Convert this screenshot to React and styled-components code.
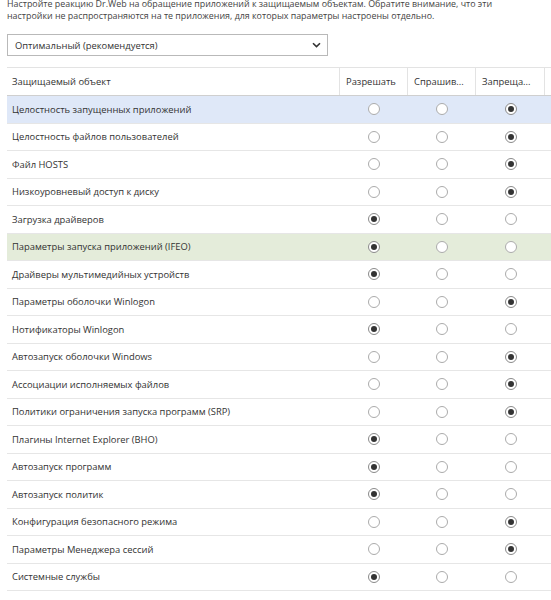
import React from 'react';
import styled, { createGlobalStyle } from 'styled-components';

const GlobalStyle = createGlobalStyle`
  html, body {
    margin: 0;
    padding: 0;
    background: #fff;
  }
  body {
    font-family: "Open Sans", "Noto Sans", "Liberation Sans", sans-serif;
    color: #333;
  }
`;

const Page = styled.div`
  width: 551px;
  height: 600px;
  overflow: hidden;
  padding-left: 7px;
  box-sizing: border-box;
`;

const Intro = styled.p`
  margin: -2px 0 0;
  font-size: 8.9px;
  line-height: 12px;
  color: #444;
  white-space: nowrap;
`;

const Select = styled.div`
  margin-top: 12px;
  width: 321px;
  height: 22px;
  box-sizing: border-box;
  border: 1px solid #b9b9b9;
  display: flex;
  align-items: center;
  justify-content: space-between;
  padding: 0 6px 0 7px;
  font-size: 9.4px;
  color: #333;
`;

const Table = styled.div`
  margin-top: 11px;
  width: 600px;
  border-top: 1px solid #e3e3e3;
`;

const Row = styled.div`
  display: grid;
  grid-template-columns: 333px 68px 68px 69px 1fr;
  height: ${p => (p.$header ? '28px' : '27.5px')};
  box-sizing: border-box;
  border-bottom: 1px solid ${p => (p.$header ? '#cfcfcf' : '#e6e6e6')};
  background: ${p =>
    p.$tone === 'blue' ? '#dfe8f8' : p.$tone === 'green' ? '#e4ecda' : '#fff'};
`;

const HeadCell = styled.div`
  display: flex;
  align-items: center;
  padding-left: ${p => (p.$first ? '5px' : '6px')};
  font-size: 9.4px;
  color: #333;
  border-right: ${p => (p.$last ? 'none' : '1px solid #e3e3e3')};
  white-space: nowrap;
  overflow: hidden;
`;

const NameCell = styled.div`
  display: flex;
  align-items: center;
  padding-left: 5px;
  font-size: 9.4px;
  color: #333;
  white-space: nowrap;
`;

const RadioCell = styled.div`
  display: flex;
  align-items: center;
  justify-content: center;
`;

const Radio = styled.span`
  width: 12px;
  height: 12px;
  box-sizing: border-box;
  border-radius: 50%;
  border: 1px solid ${p => (p.$on ? '#8a8a8a' : '#ababab')};
  background: #fff;
  display: flex;
  align-items: center;
  justify-content: center;

  &::after {
    content: '';
    width: 6px;
    height: 6px;
    border-radius: 50%;
    background: #333;
    display: ${p => (p.$on ? 'block' : 'none')};
  }
`;

const Chevron = () => (
  <svg width="9" height="6" viewBox="0 0 9 6">
    <path d="M1 1.2 L4.5 4.6 L8 1.2" fill="none" stroke="#333" strokeWidth="1.6" />
  </svg>
);

const rows = [
  ['Целостность запущенных приложений', 3, 'blue'],
  ['Целостность файлов пользователей', 3],
  ['Файл HOSTS', 3],
  ['Низкоуровневый доступ к диску', 3],
  ['Загрузка драйверов', 1],
  ['Параметры запуска приложений (IFEO)', 1, 'green'],
  ['Драйверы мультимедийных устройств', 1],
  ['Параметры оболочки Winlogon', 3],
  ['Нотификаторы Winlogon', 1],
  ['Автозапуск оболочки Windows', 3],
  ['Ассоциации исполняемых файлов', 3],
  ['Политики ограничения запуска программ (SRP)', 3],
  ['Плагины Internet Explorer (BHO)', 1],
  ['Автозапуск программ', 1],
  ['Автозапуск политик', 1],
  ['Конфигурация безопасного режима', 3],
  ['Параметры Менеджера сессий', 3],
  ['Системные службы', 1],
];

export default function App() {
  return (
    <>
      <GlobalStyle />
      <Page>
        <Intro>
          Настройте реакцию Dr.Web на обращение приложений к защищаемым объектам. Обратите внимание, что эти
          <br />
          настройки не распространяются на те приложения, для которых параметры настроены отдельно.
        </Intro>
        <Select>
          <span>Оптимальный (рекомендуется)</span>
          <Chevron />
        </Select>
        <Table>
          <Row $header>
            <HeadCell $first>Защищаемый объект</HeadCell>
            <HeadCell>Разрешать</HeadCell>
            <HeadCell>Спрашив...</HeadCell>
            <HeadCell>Запреща...</HeadCell>
            <HeadCell $last />
          </Row>
          {rows.map(([name, sel, tone]) => (
            <Row key={name} $tone={tone}>
              <NameCell>{name}</NameCell>
              {[1, 2, 3].map(i => (
                <RadioCell key={i}>
                  <Radio $on={sel === i} />
                </RadioCell>
              ))}
              <div />
            </Row>
          ))}
        </Table>
      </Page>
    </>
  );
}
